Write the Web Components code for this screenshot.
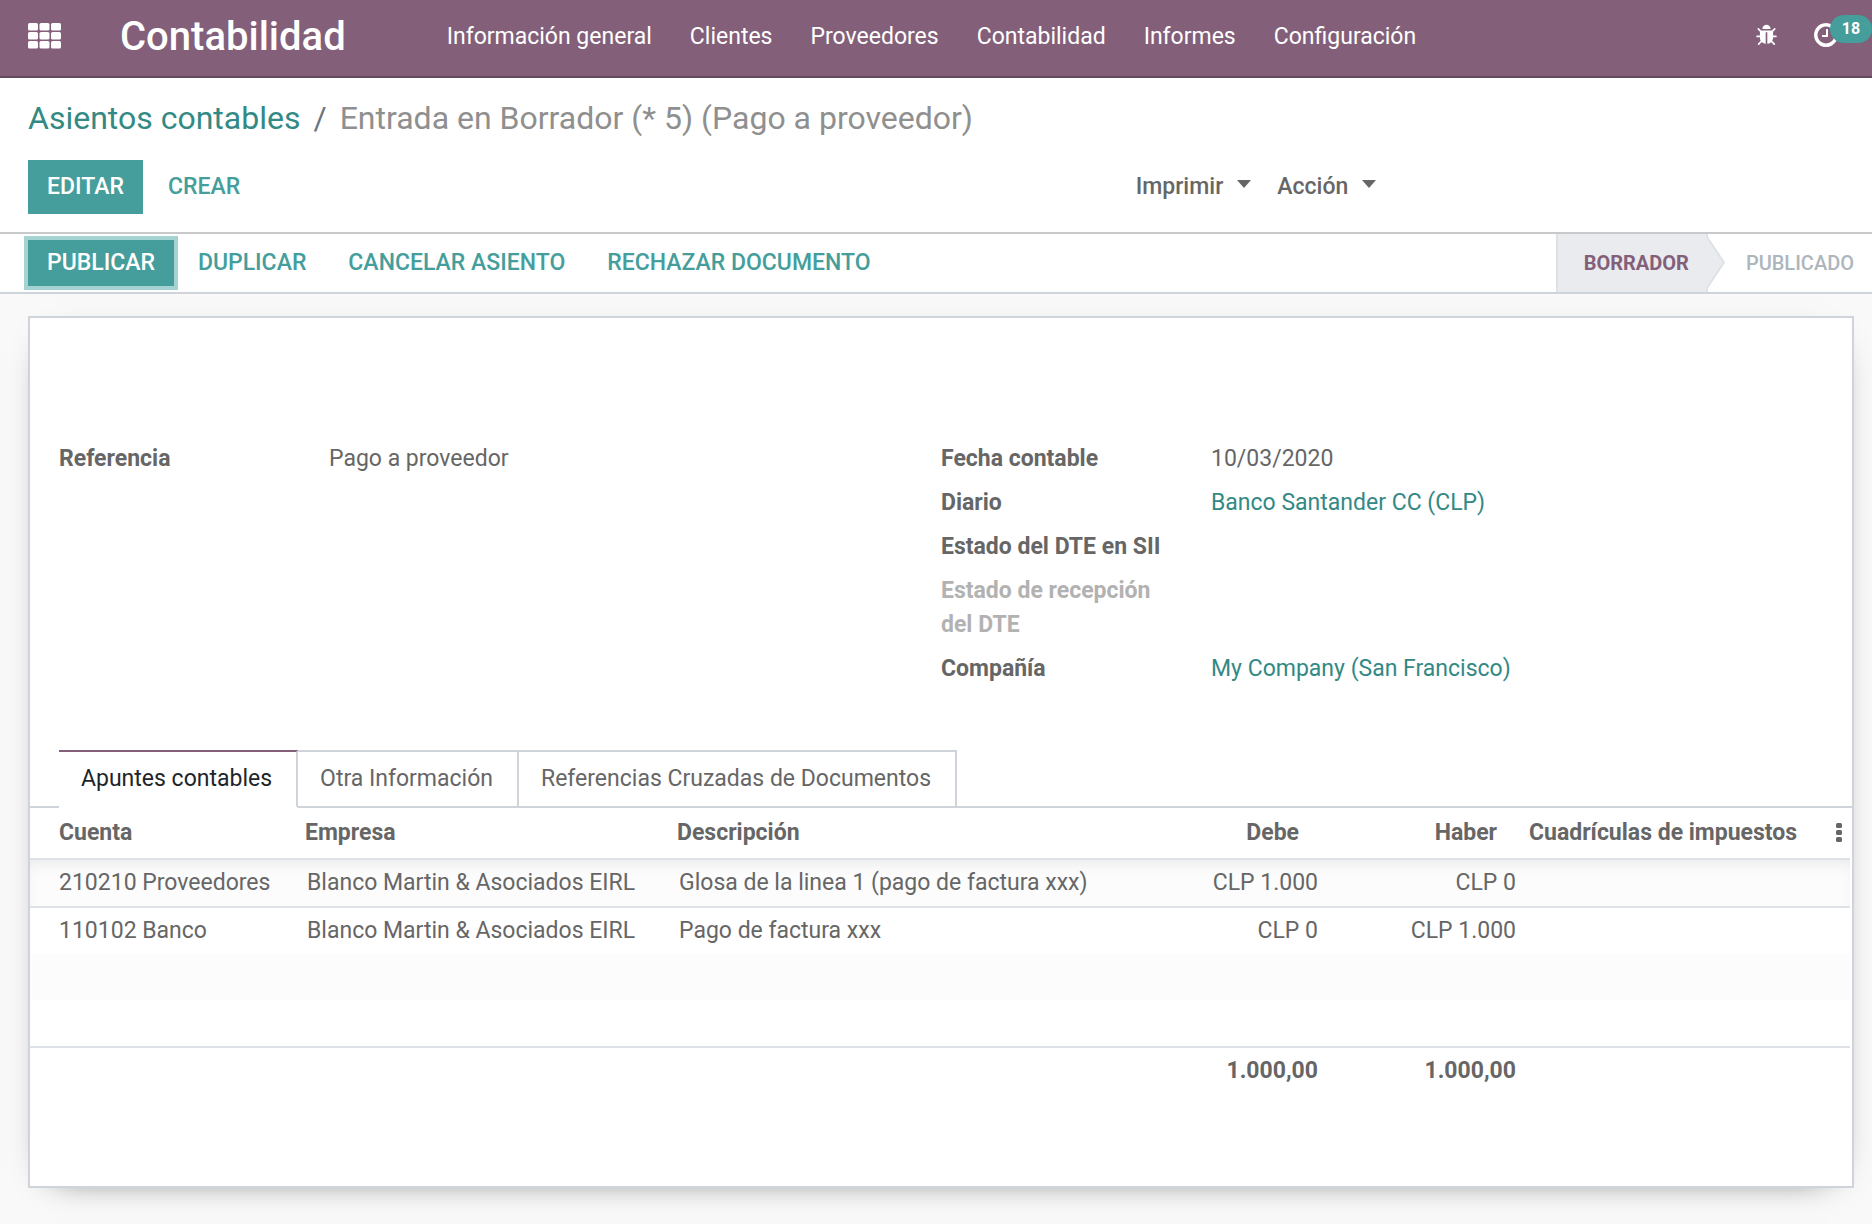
<!DOCTYPE html>
<html lang="es">
<head>
<meta charset="utf-8">
<title>Contabilidad</title>
<style>
  :root {
    --brand: #835f7a;
    --teal: #459e9b;
    --link: #338984;
    --text: #666;
    --line: #ced4da;
    --line-soft: #dee2e6;
  }
  body {
    margin: 0;
    min-height: 100vh;
    background: #f9f9f9;
    color: var(--text);
    font: 23px/34px Roboto, "Liberation Sans", sans-serif;
  }
</style>
</head>
<body>
<app-navbar app="Contabilidad" activities="18">
  <nav-link>Información general</nav-link>
  <nav-link>Clientes</nav-link>
  <nav-link>Proveedores</nav-link>
  <nav-link>Contabilidad</nav-link>
  <nav-link>Informes</nav-link>
  <nav-link>Configuración</nav-link>
</app-navbar>

<control-panel>
  <bread-crumb slot="crumbs" parent="Asientos contables">Entrada en Borrador (* 5) (Pago a proveedor)</bread-crumb>
  <action-button slot="buttons" primary tall>EDITAR</action-button>
  <action-button slot="buttons" tall>CREAR</action-button>
  <menu-button slot="menus">Imprimir</menu-button>
  <menu-button slot="menus">Acción</menu-button>
</control-panel>

<status-bar>
  <action-button primary focused>PUBLICAR</action-button>
  <action-button>DUPLICAR</action-button>
  <action-button>CANCELAR ASIENTO</action-button>
  <action-button>RECHAZAR DOCUMENTO</action-button>
  <status-step slot="steps" current>BORRADOR</status-step>
  <status-step slot="steps">PUBLICADO</status-step>
</status-bar>

<form-sheet>
  <field-group slot="groups">
    <form-field label="Referencia">Pago a proveedor</form-field>
  </field-group>
  <field-group slot="groups">
    <form-field label="Fecha contable">10/03/2020</form-field>
    <form-field label="Diario" link>Banco Santander CC (CLP)</form-field>
    <form-field label="Estado del DTE en SII"></form-field>
    <form-field label="Estado de recepción del DTE" muted></form-field>
    <form-field label="Compañía" link>My Company (San Francisco)</form-field>
  </field-group>
  <tab-strip>
    <tab-item active>Apuntes contables</tab-item>
    <tab-item>Otra Información</tab-item>
    <tab-item>Referencias Cruzadas de Documentos</tab-item>
  </tab-strip>
  <journal-items></journal-items>
</form-sheet>

<script>
  function define(name, render) {
    customElements.define(name, class extends HTMLElement {
      constructor() {
        super();
        this.attachShadow({ mode: "open" });
      }
      connectedCallback() {
        this.shadowRoot.innerHTML = render(this);
      }
    });
  }

  define("app-navbar", el => `
    <style>
      :host { display: block; background: var(--brand); border-bottom: 2px solid #67495f; color: #fff; }
      header { display: flex; align-items: center; height: 72px; padding: 0 0 4px 28px; }
      button { display: flex; padding: 0; border: 0; background: none; color: inherit; font: inherit; }
      h1 { margin: 0 0 0 59px; padding-top: 2px; font-size: 40px; line-height: 48px; font-weight: 500; }
      nav { display: flex; gap: 38px; flex: 1; margin-left: 101px; padding-top: 2px; }
      .tools { display: flex; align-items: center; gap: 34px; padding-bottom: 2px; }
      .clock { position: relative; padding-right: 32px; }
      .badge { position: absolute; right: 0; top: -6px; width: 42px; height: 28px; border-radius: 14px;
        background: var(--teal); font-size: 16px; line-height: 28px; font-weight: 700; text-align: center; }
    </style>
    <header>
      <button aria-label="Aplicaciones">
        <svg width="33" height="26" viewBox="0 0 33 26" fill="#fff">
          ${[0, 9, 18].map(y => [0, 11.5, 23].map(x => `<rect x="${x}" y="${y}" width="10" height="7.6" rx="1.6"/>`).join("")).join("")}
        </svg>
      </button>
      <h1>${el.getAttribute("app")}</h1>
      <nav><slot></slot></nav>
      <div class="tools">
        <button aria-label="Depurar">
          <svg width="23" height="23" viewBox="0 0 1792 1792" fill="#fff"><path d="M1696 960q0 26-19 45t-45 19h-224q0 171-67 290l208 209q19 19 19 45t-19 45q-18 19-45 19t-45-19l-198-197q-5 5-15 13t-42 28.500-65 36.500-82 29-97 13v-896h-128v896q-51 0-101.500-13.500t-87-33-66-39-43.500-32.500l-15-14-183 207q-20 21-48 21-24 0-43-16-19-18-20.500-44.500t15.500-46.500l202-227q-58-114-58-274h-224q-26 0-45-19t-19-45 19-45 45-19h224v-294l-173-173q-19-19-19-45t19-45 45-19 45 19l173 173h844l173-173q19-19 45-19t45 19 19 45-19 45l-173 173v294h224q26 0 45 19t19 45zm-480-576h-640q0-133 93.500-226.500t226.500-93.500 226.500 93.500 93.500 226.500z"/></svg>
        </button>
        <button class="clock" aria-label="Actividades">
          <svg width="28" height="28" viewBox="0 0 1792 1792" fill="#fff"><path d="M1024 544v448q0 14-9 23t-23 9h-320q-14 0-23-9t-9-23v-64q0-14 9-23t23-9h224v-352q0-14 9-23t23-9h64q14 0 23 9t9 23zm416 352q0-148-73-273t-198-198-273-73-273 73-198 198-73 273 73 273 198 198 273 73 273-73 198-198 73-273zm224 0q0 209-103 385.500t-279.500 279.500-385.500 103-385.500-103-279.500-279.500-103-385.500 103-385.500 279.500-279.500 385.500-103 385.500 103 279.500 279.500 103 385.500z"/></svg>
          <span class="badge">${el.getAttribute("activities")}</span>
        </button>
      </div>
    </header>`);

  define("nav-link", () => `
    <style>
      :host { display: block; }
      a { color: inherit; text-decoration: none; white-space: nowrap; }
    </style>
    <a href="#"><slot></slot></a>`);

  define("control-panel", () => `
    <style>
      :host { display: block; padding: 20px 28px 18px; background: #fff; border-bottom: 2px solid #c9c9cb; }
      .row { display: flex; align-items: center; margin-top: 22px; }
      .buttons { display: flex; gap: 6px; flex: 1; }
      .menus { display: flex; gap: 26px; flex: 0 0 39%; }
    </style>
    <slot name="crumbs"></slot>
    <div class="row">
      <div class="buttons"><slot name="buttons"></slot></div>
      <div class="menus"><slot name="menus"></slot></div>
    </div>`);

  define("bread-crumb", el => `
    <style>
      :host { display: block; font-size: 32px; line-height: 40px; }
      ol { display: flex; gap: 13px; margin: 0; padding: 0; list-style: none; }
      a { color: var(--link); text-decoration: none; }
      .sep { color: #6c757d; }
      .here { color: #8f8f8f; }
    </style>
    <ol>
      <li><a href="#">${el.getAttribute("parent")}</a></li>
      <li class="sep">/</li>
      <li class="here"><slot></slot></li>
    </ol>`);

  define("action-button", () => `
    <style>
      :host { display: block; }
      button { display: block; height: 46px; padding: 0 19px 1px; border: 0; background: none;
        color: var(--teal); font: inherit; font-weight: 500; white-space: nowrap; }
      :host([tall]) button { height: 54px; }
      :host([primary]) button { background: var(--teal); color: #fff; }
      :host([focused]) { margin-right: 1px; }
      :host([focused]) button { box-shadow: 0 0 0 4px #a5d3d1; }
    </style>
    <button><slot></slot></button>`);

  define("menu-button", () => `
    <style>
      :host { display: block; }
      button { display: flex; align-items: center; gap: 14px; padding: 0 0 1px; border: 0; background: none;
        color: inherit; font: inherit; font-weight: 500; }
      i { border: 7px solid transparent; border-top: 8px solid; border-bottom: 0; margin-bottom: 6px; }
    </style>
    <button><slot></slot><i></i></button>`);

  define("status-bar", () => `
    <style>
      :host { display: flex; justify-content: space-between; height: 58px; padding-left: 28px;
        background: #fff; border-bottom: 2px solid var(--line); }
      .actions { display: flex; align-items: center; gap: 4px; }
      .steps { display: flex; }
    </style>
    <div class="actions"><slot></slot></div>
    <div class="steps"><slot name="steps"></slot></div>`);

  define("status-step", el => `
    <style>
      :host { display: flex; font-size: 20px; line-height: 58px; font-weight: 500; color: #adb5bd; }
      span { padding: 0 18px 0 21px; }
      :host([current]) { color: var(--brand); font-weight: 700; }
      :host([current]) span { padding: 0 17px 0 26px; background: #e9ebef; border-left: 2px solid var(--line-soft); }
      svg { display: block; }
    </style>
    <span><slot></slot></span>
    ${el.hasAttribute("current") ? `<svg width="19" height="58" viewBox="0 0 19 58"><path d="M0 0V3L18 28.500L0 55V58Z" fill="#e9ebef"/><path d="M1 0V3L18 28.500L1 54V58" fill="none" stroke="#dee2e6" stroke-width="2"/></svg>` : ""}`);

  define("form-sheet", () => `
    <style>
      :host { display: block; margin: 22px 18px 36px 28px; padding: 124px 0 92px; background: #fff;
        border: 2px solid var(--line); box-shadow: 0 9px 36px -27px #000; }
      .groups { display: grid; grid-template-columns: 1fr 1fr; margin: 0 29px 64px; }
    </style>
    <div class="groups"><slot name="groups"></slot></div>
    <slot></slot>`);

  define("field-group", () => `
    <style>:host { display: flex; flex-direction: column; gap: 10px; }</style>
    <slot></slot>`);

  define("form-field", el => `
    <style>
      :host { display: grid; grid-template-columns: 230px 1fr; column-gap: 40px; }
      dl, dt, dd { margin: 0; }
      dl { display: contents; }
      dt { font-weight: 700; }
      :host([muted]) dt { color: #b2b2b2; }
      a { color: var(--link); text-decoration: none; }
    </style>
    <dl>
      <dt>${el.getAttribute("label")}</dt>
      <dd>${el.hasAttribute("link") ? `<a href="#"><slot></slot></a>` : `<slot></slot>`}</dd>
    </dl>`);

  define("tab-strip", () => `
    <style>:host { display: flex; padding-left: 29px; border-bottom: 2px solid var(--line); }</style>
    <slot></slot>`);

  define("tab-item", () => `
    <style>
      :host { display: block; margin-bottom: -2px; }
      button { display: block; box-sizing: border-box; height: 58px; padding: 0 24px 1px 22px; border: solid var(--line);
        border-width: 2px 2px 2px 0; background: none; color: inherit; font: inherit; }
      :host([active]) button { color: #212529; background: #fff; border-top-color: var(--brand); border-bottom-color: #fff; }
    </style>
    <button role="tab"><slot></slot></button>`);

  define("journal-items", () => `
    <style>
      :host { display: block; padding-right: 2px; }
      table { width: 100%; table-layout: fixed; border-spacing: 0; }
      th, td { text-align: left; white-space: nowrap; }
      th { padding: 8px 9px 8px; border-bottom: 2px solid var(--line-soft); font-weight: 700; }
      td { height: 34px; padding: 6px 11px; }
      th:first-child, td:first-child { padding-left: 29px; }
      th:last-child { padding-right: 8px; }
      .num { text-align: right; }
      th.num { padding-right: 23px; }
      td.num { padding-right: 4px; }
      tbody tr:nth-child(odd) { background: #fcfcfc; }
      tbody tr:first-child { box-shadow: inset 0 8px 16px -6px rgba(0, 0, 0, .09); }
      tbody tr:first-child td { border-bottom: 2px solid var(--line-soft); }
      tfoot td { border-top: 2px solid var(--line-soft); font-weight: 700; }
      .head { display: flex; align-items: center; justify-content: space-between; }
      button { display: flex; padding: 0; border: 0; background: none; }
    </style>
    <table>
      <colgroup>
        <col style="width:266px"><col style="width:372px"><col>
        <col style="width:198px"><col style="width:198px"><col style="width:330px">
      </colgroup>
      <thead>
        <tr>
          <th>Cuenta</th><th>Empresa</th><th>Descripción</th><th class="num">Debe</th><th class="num">Haber</th>
          <th><div class="head">Cuadrículas de impuestos
            <button aria-label="Columnas opcionales"><svg width="6" height="20" viewBox="0 0 6 20" fill="#666"><rect width="6" height="5" rx="1.500"/><rect y="7" width="6" height="5" rx="1.500"/><rect y="14" width="6" height="5" rx="1.500"/></svg></button>
          </div></th>
        </tr>
      </thead>
      <tbody>
        <tr><td>210210 Proveedores</td><td>Blanco Martin &amp; Asociados EIRL</td><td>Glosa de la linea 1 (pago de factura xxx)</td><td class="num">CLP 1.000</td><td class="num">CLP 0</td><td></td></tr>
        <tr><td>110102 Banco</td><td>Blanco Martin &amp; Asociados EIRL</td><td>Pago de factura xxx</td><td class="num">CLP 0</td><td class="num">CLP 1.000</td><td></td></tr>
        <tr><td colspan="6"></td></tr>
        <tr><td colspan="6"></td></tr>
      </tbody>
      <tfoot>
        <tr><td></td><td></td><td></td><td class="num">1.000,00</td><td class="num">1.000,00</td><td></td></tr>
      </tfoot>
    </table>`);
</script>
</body>
</html>
